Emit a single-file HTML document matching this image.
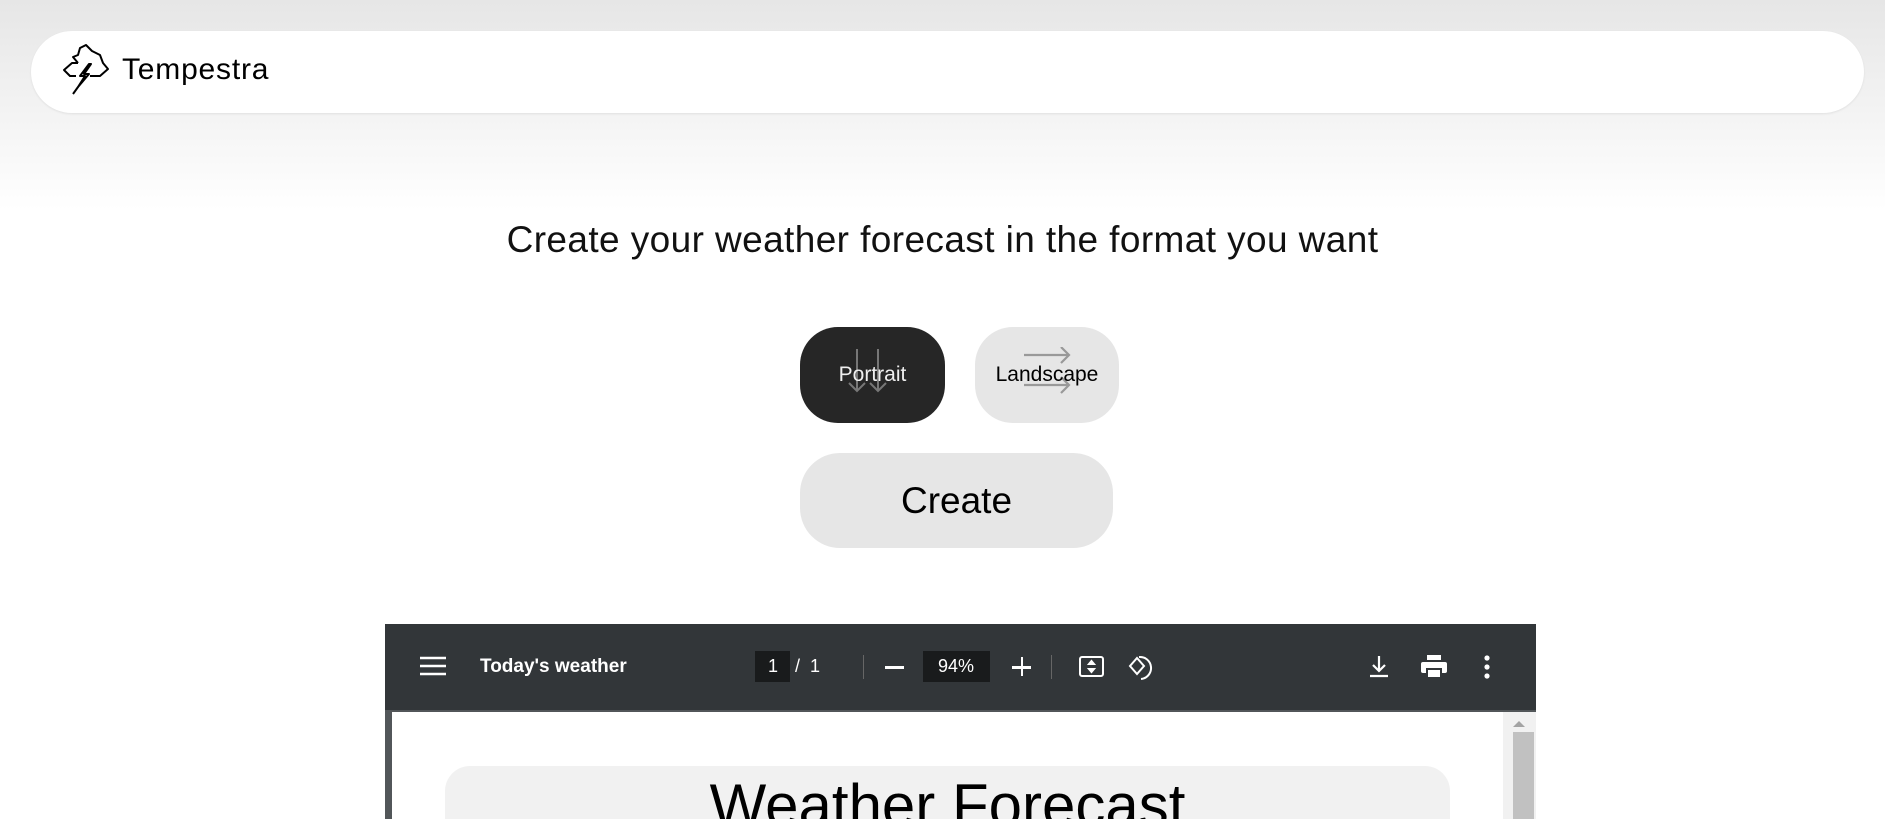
<!DOCTYPE html>
<html><head><meta charset="utf-8"><style>
*{margin:0;padding:0;box-sizing:border-box}
body{width:1885px;height:819px;overflow:hidden;font-family:"Liberation Sans",sans-serif;background:linear-gradient(#e6e6e6 0px,#f3f3f3 110px,#fff 210px);position:relative}
.hdr{position:absolute;left:31px;top:31px;width:1833px;height:82px;background:#fff;border-radius:41px;box-shadow:0 1px 2px rgba(0,0,0,.08)}
.hdr svg{position:absolute;left:29px;top:12px}
.hdr span{position:absolute;left:91px;top:22px;font-size:30px;color:#000;letter-spacing:0.8px}
h1{position:absolute;left:0;width:1885px;top:219px;text-align:center;font-weight:normal;font-size:37px;letter-spacing:0.4px;color:#111}
.btn{position:absolute;border-radius:38px;display:flex;align-items:center;justify-content:center}
.pv{position:absolute;left:385px;top:624px;width:1151px;height:195px;background:#525659;overflow:hidden}
.tb{position:absolute;left:0;top:0;width:1151px;height:86px;background:#323639;color:#fff}
.tb *{position:absolute}
</style></head><body>
<div class="hdr">
<svg width="50" height="52" viewBox="0 0 50 52" fill="none" stroke="#000" stroke-width="2" stroke-linejoin="round">
<path d="M18 20 L12 20 L4 27 L10 33 L16 33 M30 33 L40 33 L48 26 L43 20 L40 12 L32 8 L26 2 L20 5 L18 12 L13 14 L18 20"/>
<path d="M29 21 L20 33 L25 33 L18 44 L29 31 L24 31 L31 21 Z"/>
<path d="M18 44 L13 51"/>
</svg>
<span>Tempestra</span>
</div>
<h1>Create your weather forecast in the format you want</h1>
<div class="btn" style="left:800px;top:327px;width:145px;height:96px;background:#262626;color:#eee;font-size:21px">
<svg width="60" height="60" viewBox="0 0 60 60" style="position:absolute;left:37px;top:18px" fill="none" stroke="#777" stroke-width="2"><path d="M20 4 V46 M12 38 L20 46 L28 38 M41 4 V46 M33 38 L41 46 L49 38"/></svg>
<span style="position:relative">Portrait</span></div>
<div class="btn" style="left:975px;top:327px;width:144px;height:96px;background:#e6e6e6;color:#000;font-size:21px">
<svg width="60" height="60" viewBox="0 0 60 60" style="position:absolute;left:47px;top:20px" fill="none" stroke="#999" stroke-width="2.2"><path d="M2 8 H47 M39 0 L47 8 L39 16 M2 38 H47 M39 30 L47 38 L39 46"/></svg>
<span style="position:relative">Landscape</span></div>
<div class="btn" style="left:800px;top:453px;width:313px;height:95px;background:#e6e6e6;color:#000;font-size:37px;border-radius:40px">Create</div>
<div class="pv">
<div class="tb">
<svg style="left:35px;top:32px" width="26" height="20"><path d="M0 2H26M0 10H26M0 18H26" stroke="#fff" stroke-width="2.5"/></svg>
<div style="left:95px;top:32px;font-size:19px;font-weight:bold">Today's weather</div>
<div style="left:370px;top:27px;width:35px;height:31px;background:#191b1c"></div>
<div style="left:383px;top:32px;font-size:18px">1</div>
<div style="left:410px;top:32px;font-size:18px">/&nbsp;&nbsp;1</div>
<div style="left:478px;top:31px;width:1px;height:24px;background:#666"></div>
<div style="left:500px;top:42px;width:19px;height:2.5px;background:#fff"></div>
<div style="left:538px;top:27px;width:67px;height:31px;background:#191b1c"></div>
<div style="left:553px;top:32px;font-size:18px">94%</div>
<div style="left:627px;top:42px;width:19px;height:2.5px;background:#fff"></div>
<div style="left:635.5px;top:33px;width:2.5px;height:19px;background:#fff"></div>
<div style="left:666px;top:31px;width:1px;height:24px;background:#666"></div>
<svg style="left:694px;top:32px" width="26" height="22" fill="none" stroke="#fff" stroke-width="2"><rect x="1" y="1" width="23" height="19" rx="2"/><path d="M12.5 5 L10 8 H15Z M12.5 16 L10 13 H15Z" fill="#fff"/></svg>
<svg style="left:742px;top:30px" width="28" height="28" fill="none" stroke="#fff" stroke-width="2"><path d="M10 4 L3 12 L10 20 L17 12 Z"/><path d="M12 3 A11 11 0 0 1 14 25"/></svg>
<svg style="left:983px;top:31px" width="22" height="24" fill="none" stroke="#fff" stroke-width="2.2"><path d="M11 1V15M5 10L11 16L17 10M2 21H20"/></svg>
<svg style="left:1036px;top:31px" width="26" height="24" fill="#fff"><rect x="6" y="0" width="14" height="5"/><rect x="0" y="7" width="26" height="11" rx="2"/><rect x="6" y="14" width="14" height="9" fill="#fff" stroke="#323639" stroke-width="2"/></svg>
<svg style="left:1098px;top:31px" width="8" height="24" fill="#fff"><circle cx="4" cy="3" r="2.6"/><circle cx="4" cy="12" r="2.6"/><circle cx="4" cy="21" r="2.6"/></svg>
</div>
<div style="position:absolute;left:7px;top:88px;width:1111px;height:107px;background:#fff"></div>
<div style="position:absolute;left:1118px;top:88px;width:33px;height:107px;background:#f1f1f1"></div>
<div style="position:absolute;left:1128px;top:97px;width:0;height:0;border-left:6px solid transparent;border-right:6px solid transparent;border-bottom:6px solid #a3a3a3"></div>
<div style="position:absolute;left:1128px;top:108px;width:21px;height:87px;background:#c1c1c1"></div>
<div style="position:absolute;left:60px;top:142px;width:1005px;height:53px;background:#f1f1f1;border-radius:25px 25px 0 0;text-align:center;font-size:60px;color:#000;padding-top:10px;line-height:60px;overflow:hidden">Weather Forecast</div>
</div>
</body></html>
